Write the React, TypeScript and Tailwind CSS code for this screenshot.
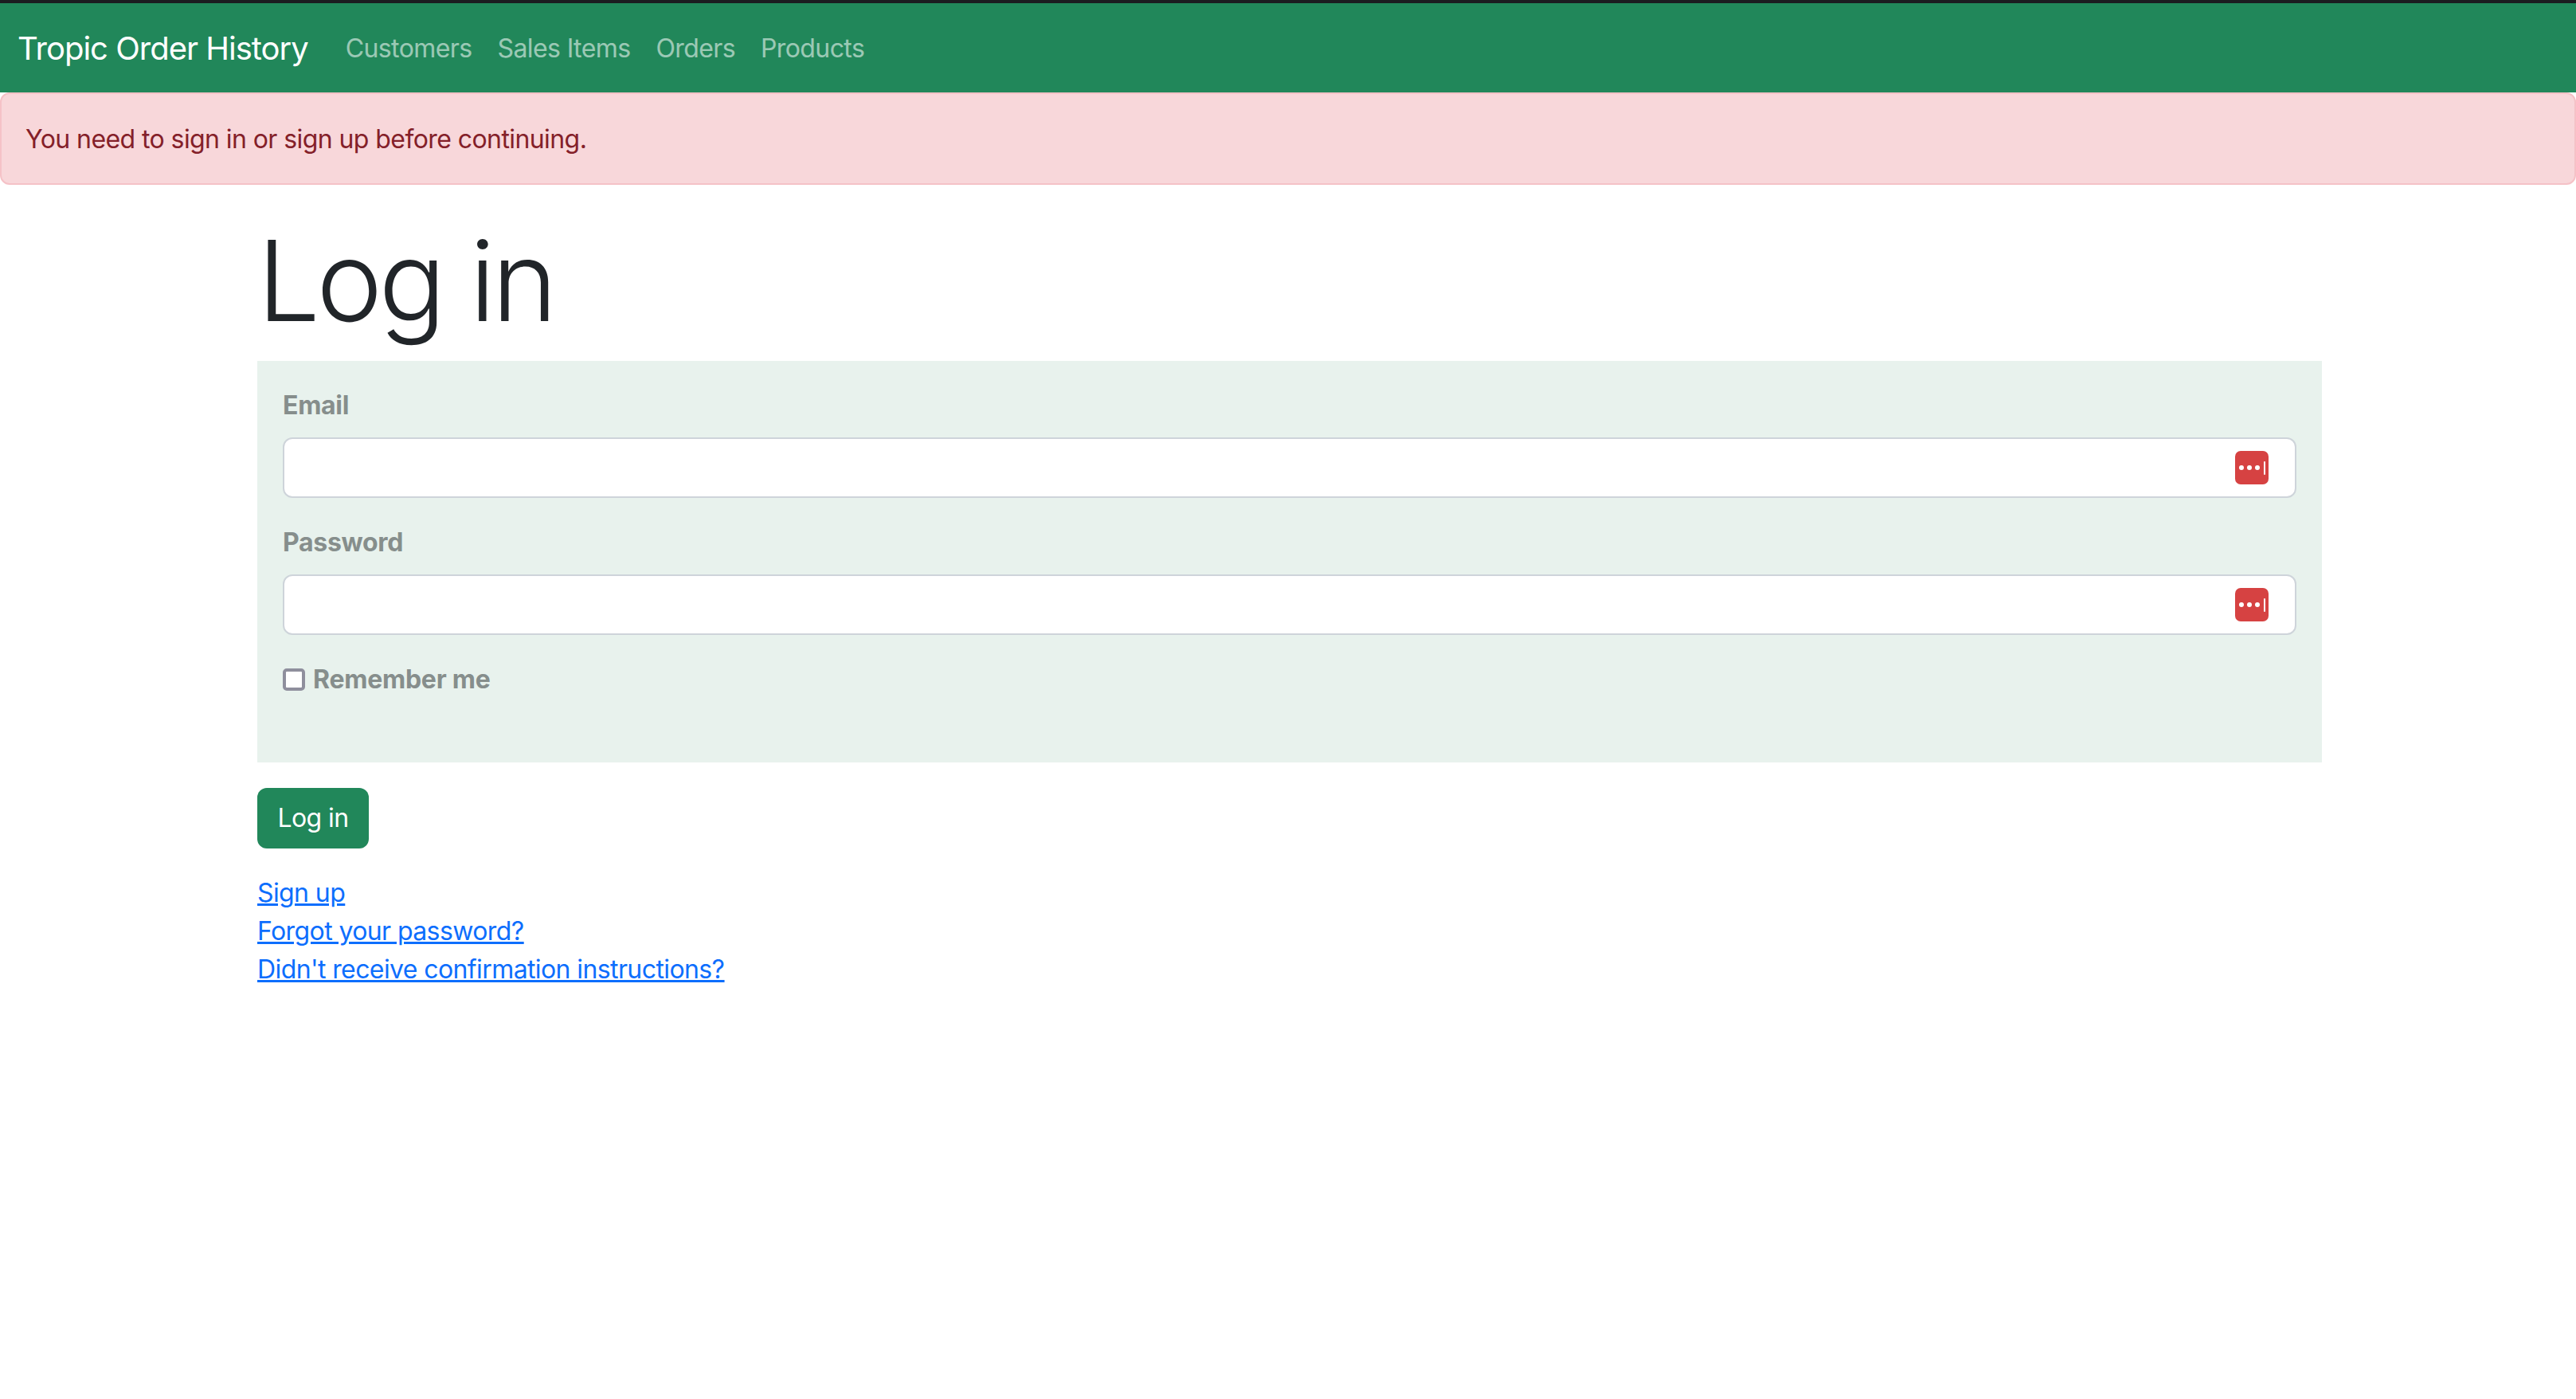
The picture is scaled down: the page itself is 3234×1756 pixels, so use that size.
import React from "react";

function Field({ label, type }: { label: string; type: string }) {
  return (
    <div className="mb-8">
      <label className="block font-bold text-[#868e8c] mb-4 tracking-[-0.3px]">{label}</label>
      <div className="relative">
        <input
          type={type}
          className="block w-full h-[76px] bg-white border-2 border-[#ced4da] rounded-xl px-6"
        />
        <div className="absolute right-[35px] top-[17px] w-[42px] h-[42px] rounded-[7px] bg-[#d64242] flex items-center pl-[4.5px] gap-[4.3px]">
          <span className="w-[6px] h-[6px] rounded-full bg-white" />
          <span className="w-[6px] h-[6px] rounded-full bg-white" />
          <span className="w-[6px] h-[6px] rounded-full bg-white" />
          <span className="w-[2px] h-[17px] ml-[1px] rounded-sm bg-white" />
        </div>
      </div>
    </div>
  );
}

export default function App() {
  return (
    <div className="min-h-[1756px] bg-white text-[32px] leading-[48px] text-[#212529] font-['Inter',sans-serif] tracking-[-0.6px]">
      <div className="h-1 bg-[#1b1c20]" />
      <nav className="h-[112px] bg-[#21875a] flex items-center pl-[22px] pt-[2px]">
        <a className="text-[40px] text-white tracking-[-1px] mr-[47px]">Tropic Order History</a>
        <ul className="flex gap-8 text-white/55">
          <li>Customers</li>
          <li>Sales Items</li>
          <li>Orders</li>
          <li>Products</li>
        </ul>
      </nav>
      <div className="h-[116px] bg-[#f8d7da] border-2 border-[#f5c2c7] rounded-xl text-[#842029] px-[30px] pt-[33px] tracking-[-0.58px] mb-[35px]">
        You need to sign in or sign up before continuing.
      </div>
      <main className="ml-[323px] w-[2592px]">
        <h1 className="text-[140px] leading-[170px] font-light mb-4 tracking-[-4.8px]">Log in</h1>
        <form>
          <div className="bg-[#e8f2ed] p-8">
            <Field label="Email" type="email" />
            <Field label="Password" type="password" />
            <label className="flex items-center h-12 mb-12 font-bold text-[#868e8c] tracking-[-0.25px]">
              <span className="w-[28px] h-[28px] mr-[10px] bg-white border-[4px] border-[#8f8f9d] rounded-[5px]" />
              Remember me
            </label>
          </div>
          <button type="button" className="mt-8 w-[140px] h-[76px] bg-[#21875a] text-white rounded-xl">
            Log in
          </button>
        </form>
        <div className="mt-8 flex flex-col items-start text-[#0d6efd] underline">
          <a>Sign up</a>
          <a>Forgot your password?</a>
          <a>Didn't receive confirmation instructions?</a>
        </div>
      </main>
    </div>
  );
}
